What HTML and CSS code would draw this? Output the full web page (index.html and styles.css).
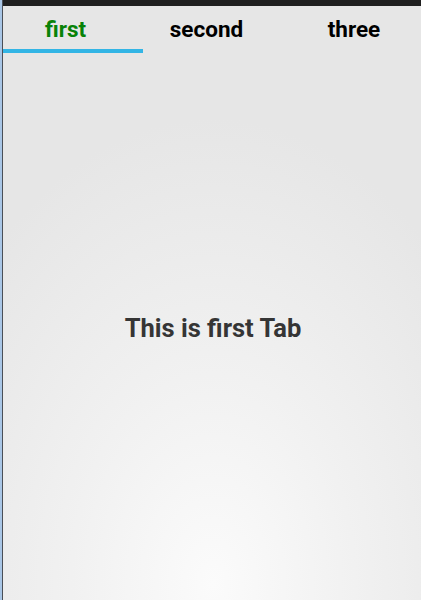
FILE: index.html
```html
<!DOCTYPE html>
<html>
<head>
  <title>Tabs</title>
  <meta name="viewport" content="width=device-width, initial-scale=1">
  <link rel="stylesheet" href="styles.css">
</head>
<body>
  <div class="frame">
    <div class="edge"></div>
    <div class="screen">
      <div class="statusbar"></div>
      <div class="tabs">
        <div class="tab tab-first active">first</div>
        <div class="tab tab-second">second</div>
        <div class="tab tab-three">three</div>
      </div>
      <div class="content">
        <div class="message">This is first Tab</div>
      </div>
    </div>
  </div>
</body>
</html>
```

FILE: styles.css
```css
/* Página */
body {
  margin: 0;
  font-family: Roboto, "Liberation Sans", sans-serif;
  background: #e6e6e6;
}

.frame {
  display: flex;
  height: 600px;
  overflow: hidden;
}

/* Borda da janela à esquerda */
.edge {
  flex: 0 0 2px;
  background: #a9c6e6;
  border-right: 1px solid #4a4f57;
}

.screen {
  flex: 1;
  display: flex;
  flex-direction: column;
}

.statusbar {
  height: 6px;
  background: #1f1f1f;
}

/* Abas */
.tabs {
  display: flex;
  height: 47px;
  background: #e6e6e6;
}

.tab {
  width: 140px;
  box-sizing: border-box;
  display: flex;
  align-items: center;
  justify-content: center;
  padding-top: 3px;
  font-size: 22.5px;
  font-weight: bold;
  color: #000;
  border-bottom: 4px solid transparent;
}

.tab-first {
  padding-right: 15px;
}

.tab-second {
  padding-right: 13px;
}

.tab-three {
  flex: 1;
  padding-left: 2px;
}

.tab.active {
  color: #088208;
  border-bottom-color: #33b5e5;
}

/* Conteúdo */
.content {
  flex: 1;
  display: flex;
  align-items: center;
  justify-content: center;
  background: radial-gradient(ellipse 75% 85% at 50% 97%, #fbfbfb 0%, #f1f1f1 45%, #e6e6e6 100%);
}

.message {
  font-size: 25.5px;
  font-weight: bold;
  color: #353535;
  padding-top: 2px;
}
```
